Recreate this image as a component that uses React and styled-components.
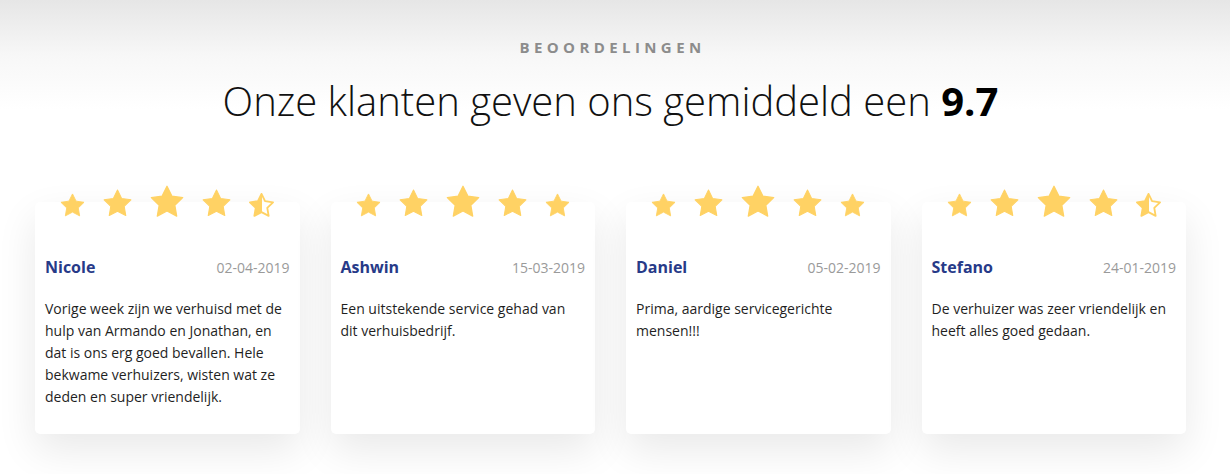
import styled, { createGlobalStyle } from 'styled-components';

const GlobalStyle = createGlobalStyle`
  html, body {
    margin: 0;
    padding: 0;
    background: #fff;
  }
  body {
    font-family: 'Open Sans', 'Liberation Sans', sans-serif;
  }
`;

const Section = styled.section`
  height: 474px;
  box-sizing: border-box;
  padding: 37px 44px 0 35px;
  background: linear-gradient(180deg, #e6e6e6 0px, #f7f7f7 55px, #ffffff 110px);
  overflow: hidden;
`;

const Label = styled.div`
  text-align: center;
  font-size: 15px;
  line-height: 20px;
  font-weight: 700;
  letter-spacing: 4.4px;
  color: #8c8c8c;
  text-transform: uppercase;
  padding-left: 4px;
`;

const Heading = styled.h2`
  margin: 20px 0 0;
  text-align: center;
  font-size: 40px;
  line-height: 48px;
  font-weight: 300;
  color: #111;

  strong {
    font-weight: 700;
    color: #000;
  }
`;

const Grid = styled.div`
  margin-top: 77px;
  display: grid;
  grid-template-columns: repeat(4, 1fr);
  gap: 31px;
`;

const Card = styled.article`
  background: #fff;
  border-radius: 5px;
  padding: 0 10px 26px;
  box-shadow: 0 16px 40px rgba(0, 0, 0, 0.09);
`;

const Stars = styled.div`
  margin-top: -19px;
  height: 34px;
  display: flex;
  justify-content: center;
  align-items: flex-end;
  gap: 18px;
`;

const Meta = styled.div`
  margin-top: 39px;
  display: flex;
  justify-content: space-between;
  align-items: baseline;
`;

const Name = styled.span`
  font-size: 16px;
  line-height: 22px;
  font-weight: 700;
  color: #273a88;
`;

const DateText = styled.span`
  font-size: 14px;
  line-height: 22px;
  color: #9a9a9a;
`;

const Body = styled.p`
  margin: 19px 0 0;
  font-size: 14px;
  line-height: 22px;
  color: #1f1f1f;
`;

const STAR = '12,2 15.09,8.26 22,9.27 17,14.14 18.18,21.02 12,17.77 5.82,21.02 7,14.14 2,9.27 8.91,8.26';
const sizes = [25, 29, 34, 29, 25];

const Star = ({ size, half, id }) => (
  <svg width={size} height={size * 0.951} viewBox="1.2 1.2 21.6 20.6">
    {half && (
      <defs>
        <linearGradient id={id} x1="0" x2="1" y1="0" y2="0">
          <stop offset="50%" stopColor="#ffd264" />
          <stop offset="50%" stopColor="#fff" stopOpacity="0" />
        </linearGradient>
      </defs>
    )}
    <polygon
      points={STAR}
      fill={half ? `url(#${id})` : '#ffd264'}
      stroke="#ffd264"
      strokeWidth={half ? 1.6 : 0.8}
      strokeLinejoin="round"
    />
  </svg>
);

const reviews = [
  {
    name: 'Nicole',
    date: '02-04-2019',
    half: true,
    text: 'Vorige week zijn we verhuisd met de hulp van Armando en Jonathan, en dat is ons erg goed bevallen. Hele bekwame verhuizers, wisten wat ze deden en super vriendelijk.',
  },
  {
    name: 'Ashwin',
    date: '15-03-2019',
    half: false,
    text: 'Een uitstekende service gehad van dit verhuisbedrijf.',
  },
  {
    name: 'Daniel',
    date: '05-02-2019',
    half: false,
    text: 'Prima, aardige servicegerichte mensen!!!',
  },
  {
    name: 'Stefano',
    date: '24-01-2019',
    half: true,
    text: 'De verhuizer was zeer vriendelijk en heeft alles goed gedaan.',
  },
];

export default function App() {
  return (
    <>
      <GlobalStyle />
      <Section>
        <Label>Beoordelingen</Label>
        <Heading>
          Onze klanten geven ons gemiddeld een <strong>9.7</strong>
        </Heading>
        <Grid>
          {reviews.map((r, i) => (
            <Card key={r.name}>
              <Stars>
                {sizes.map((s, j) => (
                  <Star key={j} size={s} half={r.half && j === 4} id={`half-${i}`} />
                ))}
              </Stars>
              <Meta>
                <Name>{r.name}</Name>
                <DateText>{r.date}</DateText>
              </Meta>
              <Body>{r.text}</Body>
            </Card>
          ))}
        </Grid>
      </Section>
    </>
  );
}
